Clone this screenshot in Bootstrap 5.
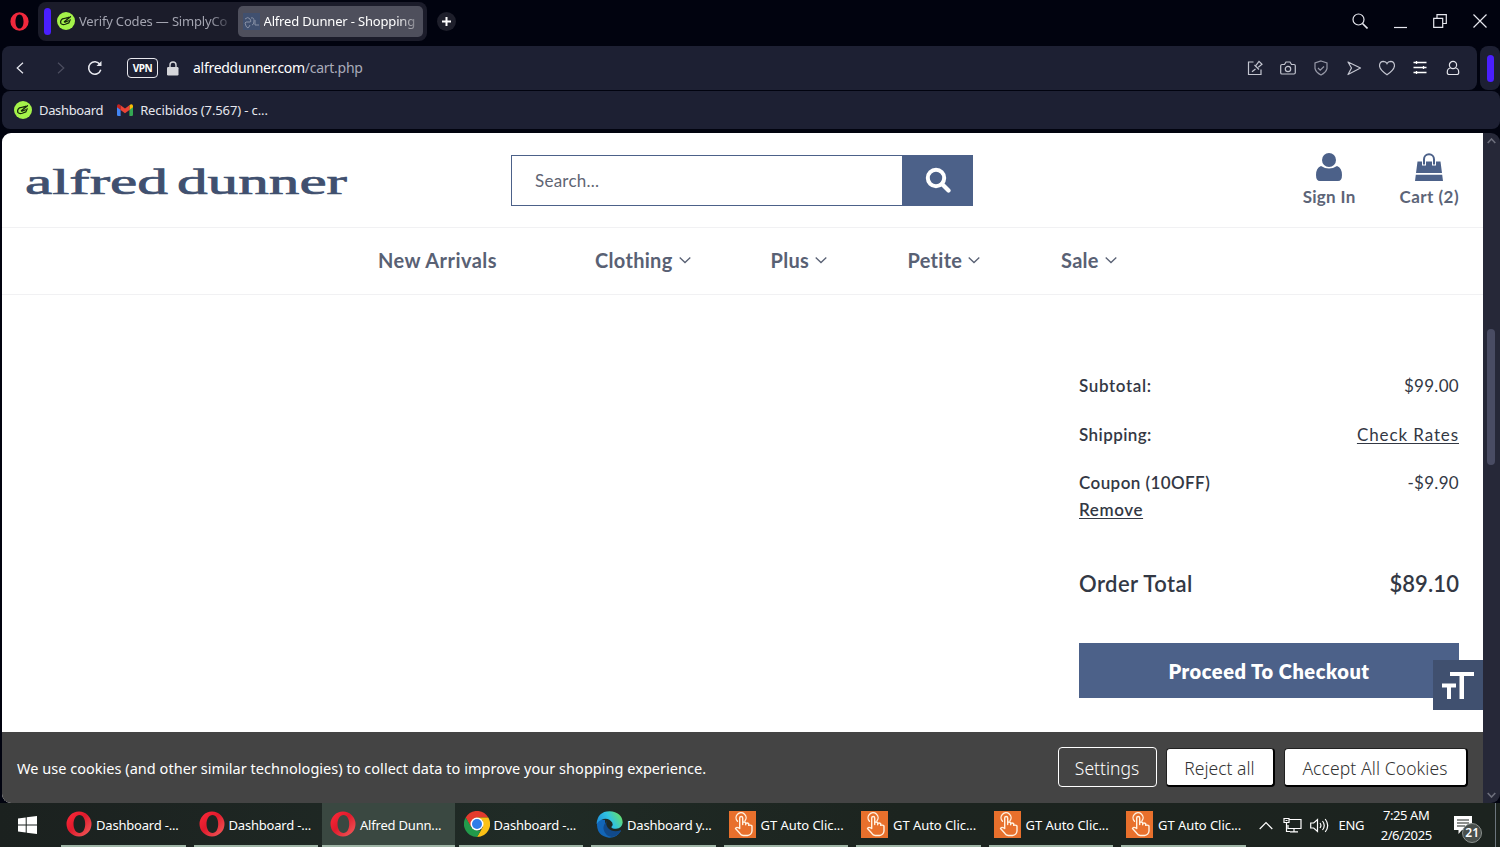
<!DOCTYPE html>
<html lang="en">
<head>
<meta charset="utf-8">
<title>Alfred Dunner - Shopping Cart</title>
<link href="https://cdn.jsdelivr.net/npm/bootstrap@5.3.0/dist/css/bootstrap.min.css" rel="stylesheet">
<style>
body{height:847px;overflow:hidden;background:#01030f;font-family:"Noto Sans","Open Sans",sans-serif;font-size:13px;line-height:1.2;color:#e6e7ee}
svg{display:block;flex:none}
.line-ico{fill:none;stroke:currentColor;stroke-width:1.2}
.tabstrip{height:46px}
.opera-mark{margin-left:10px;margin-right:9px}
.island{height:39px;width:389px;border-radius:8px;background:#1b1c2a;padding:0 4px 0 6px;margin-top:-4px}
.island-bar{width:7px;height:27px;border-radius:4px;background:#4a1fff}
.tab-idle{width:187px;color:#a3a4b0;padding-left:6px}
.tab-on{width:186px;height:31px;border-radius:5px;background:#4e4f5c;color:#fff;padding-left:5px}
.fade-end{white-space:nowrap;padding-top:2px;letter-spacing:-.17px;-webkit-mask-image:linear-gradient(90deg,#000 88%,rgba(0,0,0,.3));mask-image:linear-gradient(90deg,#000 88%,rgba(0,0,0,.3))}
.plus-tab{width:19px;height:19px;border-radius:50%;background:#1e1f2b;margin-left:10px;margin-top:-4px}
.win-ctl{margin-top:-4px;gap:26px;padding-right:13px}
.barbox{background:#1d2033;border-radius:8px}
.addr{height:44px;margin-left:2px;margin-right:3px}
.vpn{width:31px;height:20px;border:1.5px solid #e8e8ee;border-radius:4px;font-size:10px;font-weight:700;color:#fff;letter-spacing:-.4px}
.side-toggle{width:20px;height:44px}
.side-toggle i{width:7px;height:27px;border-radius:4px;background:#4a1fff}
.url{font-size:14px;color:#fff;letter-spacing:-.28px}
.url span{color:#a9abb9}
.marks{height:38px;margin:1px 0 0 2px;padding-left:12px}
.marks span{padding-top:2px}
.viewport{height:670px;margin:4px 0 0 2px;border-radius:9px;overflow:hidden;background:#262838}
.page{width:1481px;background:#fff;font-family:Lato,sans-serif;color:#333844}
.shop-head{height:95px;border-bottom:1px solid #f1f1f3}
.shop-nav{height:67px;border-bottom:1px solid #f1f1f3;font-size:20px;font-weight:700;color:#596174;padding-left:376px;padding-bottom:2px;letter-spacing:.3px}
.brandmark{margin-left:22px;width:326px;margin-top:6px;font-family:"Liberation Serif",serif;font-size:36px}
.finder{width:462px;height:51px;margin-left:161px}
.finder .form-control{border:1px solid #4c6189;border-radius:0;font-size:17px;color:#596174;padding:2px 22px 0 23px;background:#fff;box-shadow:none;letter-spacing:.25px}
.finder .form-control::placeholder{color:#5f6573;opacity:1}
.finder .btn{width:71px;border-radius:0;background:#4c6189;padding:0}
.acct{color:#5c6477;font-size:17px;font-weight:700;line-height:20px;letter-spacing:.3px}
.acct-label{margin-top:6px}
.totals{width:380px;margin-left:1077px;padding-top:77px;font-size:17px;line-height:27px;letter-spacing:.3px}
.totals dt{font-weight:600;letter-spacing:.42px}
.totals dd{margin:0}
.totals .trow{margin-bottom:21.6px}
.totals a{color:inherit;text-decoration:underline;text-underline-offset:2px;text-decoration-thickness:1px}
.grand{font-size:22px;font-weight:600;letter-spacing:.1px;padding-top:25px}
.totals .checkout{text-decoration:none}
.checkout{height:55px;margin-top:46px;border-radius:0;background:#4c6189;color:#fff!important;font-size:20px;font-weight:800;letter-spacing:.55px;padding-bottom:5px}
.textsize{right:0;bottom:93px;width:50px;height:50px;background:#40506f}
.cookies{height:71px;background:#444;color:#fff;font-family:"Noto Sans",sans-serif;font-size:14.5px;padding:0 15.500px 1px 15px}
.cookies .btn{font-family:"Noto Sans",sans-serif;font-weight:300;font-size:17.5px;padding:3px 0 0;border-radius:4px;letter-spacing:0}
.ck-set{width:99px;height:40px;border:1px solid #fff;color:#fff}
.ck-fill{height:39px;background:#fff;color:#333;border:1px solid #222;border-right:2px solid #000;border-bottom:2px solid #000}
.scroller{width:17px;padding:5px 4px}
.thumb{width:8px;height:136px;border-radius:4px;background:#494c63;margin-top:185px}
.taskbar{height:44px;background:linear-gradient(90deg,#1b211f,#202b26 35%,#1c241f 60%,#1c231f);font-size:13px;color:#fff}
.task{width:132.5px;padding:0 4px;height:44px}
.task>div{height:44px;border-bottom:2px solid #9fb5a6;padding-left:5px;white-space:nowrap}
.task-on{background:#3a4841}
.gt{width:27px;height:27px;background:#e8702c}
.tasklabel{letter-spacing:-.2px;padding-top:3px;margin-left:4px}
.tasklabel.gtl{letter-spacing:-.05px;margin-left:5px}
.clock{width:60px;line-height:20px;letter-spacing:-.4px;font-size:13px}
.count{left:8px;top:7px;width:20px;height:20px;border-radius:50%;background:#494f4c;border:1px solid #8b918e;font-size:12px;font-weight:600;line-height:18px}
</style>
</head>
<body class="d-flex flex-column">
<svg width="0" height="0" class="position-absolute">
<defs>
<linearGradient id="og" x1="0" x2="1" y1="0" y2="1"><stop offset="0" stop-color="#ff2b3a"/><stop offset=".45" stop-color="#e01a2c"/><stop offset="1" stop-color="#f2605e"/></linearGradient>
<linearGradient id="eg" x1="0" x2="1" y1=".6" y2=".2"><stop offset="0" stop-color="#1d8fdc"/><stop offset=".5" stop-color="#31c3e0"/><stop offset="1" stop-color="#6be35c"/></linearGradient>
<symbol id="opera" viewBox="0 0 26 26"><path fill="url(#og)" fill-rule="evenodd" d="M13 .5a12.500 12.500 0 1 1 0 25 12.500 12.500 0 0 1 0-25zm.5 3.500c-3.600 0-6 4-6 9s2.400 9 6 9 5.700-4 5.700-9-2.100-9-5.700-9z"/></symbol>
<symbol id="simply" viewBox="0 0 18 18"><circle cx="9" cy="9" r="9" fill="#a4f24a"/><g fill="none" stroke="#15240c" stroke-width="1.200" stroke-linejoin="round" stroke-linecap="round"><path d="M9.300 6L5.500 6.800Q2.900 8.700 3.800 11.300q1.600 1.900 4.500.9l3.500-1.300 1.400-3.200"/><path d="M7.300 9.800l6.200-5.100M8 10.300l3.500-1.500M9.300 6l2.500-.8"/></g></symbol>
<symbol id="hand" viewBox="0 0 27 27"><g fill="none" stroke="#fff1e0" stroke-width="1.400" stroke-linejoin="round" stroke-linecap="round"><path d="M10.700 17.500V7a1.500 1.500 0 0 1 3 0v6.500-2q1.600-1.200 3 .2v2-1.300q1.800-1 3 .3v1.700q2.200-.8 3.300.6V20q-.5 4-4.500 4.500h-4.300q-2.200-.3-3.400-2.200L6.500 17.500q.8-2.200 4.200 0"/><path d="M8.500 10.300a5 5 0 1 1 7.500-.4"/></g></symbol>
<symbol id="chev" viewBox="0 0 12 8"><path d="M.7 1.500l5.300 5 5.300-5" fill="none" stroke="#596174" stroke-width="1.300"/></symbol>
</defs></svg>

<header class="tabstrip d-flex align-items-center flex-shrink-0">
  <svg class="opera-mark" width="19" height="19" viewBox="0 0 26 26" style="margin-top:-3px"><path fill="#f0283c" fill-rule="evenodd" d="M13 .5a12.500 12.500 0 1 1 0 25 12.500 12.500 0 0 1 0-25zm0 2.800c-3.500 0-5.500 4.500-5.500 9.700s2 9.700 5.500 9.700 5.500-4.500 5.500-9.700-2-9.700-5.500-9.700z"/></svg>
  <div class="island d-flex align-items-center">
    <div class="island-bar"></div>
    <div class="tab-idle d-flex align-items-center gap-1"><svg width="18" height="18"><use href="#simply"/></svg><span class="fade-end">Verify Codes — SimplyCo</span></div>
    <div class="tab-on d-flex align-items-center gap-1"><svg width="17" height="17" viewBox="0 0 17 17"><path fill="#40506f" d="M0 0h17v17H0z"/><path d="M2 6q3-3 5 0t0 3-4 0 0 4 4-1M8 5q3-1 3 3t-2 4M12 7v5h4" fill="none" stroke="#8790a5"/></svg><span class="fade-end">Alfred Dunner - Shopping</span></div>
  </div>
  <div class="plus-tab d-flex align-items-center justify-content-center"><svg width="9" height="9" viewBox="0 0 9 9"><path d="M4.500 0v9M0 4.500h9" stroke="#fff" stroke-width="2"/></svg></div>
  <div class="win-ctl d-flex align-items-center ms-auto">
    <svg class="line-ico" width="16" height="16" viewBox="0 0 16 16"><circle cx="6.500" cy="6.500" r="5.500"/><path d="M10.500 10.500L15.500 15.500" stroke-width="1.600"/></svg>
    <svg class="line-ico" width="13" height="16" viewBox="0 0 13 16"><path d="M0 14.500h13"/></svg>
    <svg class="line-ico" width="14" height="14" viewBox="0 0 14 14"><path d="M.7 4.300h9v9h-9zM4 4V.7h9.300v8.800H10"/></svg>
    <svg class="line-ico" width="14" height="14" viewBox="0 0 14 14"><path d="M.5.5l13 13M13.500.5l-13 13"/></svg>
  </div>
</header>

<div class="d-flex flex-shrink-0">
  <nav class="barbox addr flex-fill d-flex align-items-center">
    <svg class="line-ico" width="8" height="12" viewBox="0 0 8 12" style="margin-left:14px"><path d="M7 .7L1.200 6 7 11.300"/></svg>
    <svg class="line-ico" width="8" height="12" viewBox="0 0 8 12" style="margin-left:33px;color:#4c4e60"><path d="M1 .7L6.800 6 1 11.300"/></svg>
    <svg class="line-ico" width="16" height="16" viewBox="0 0 16 16" style="margin-left:22px"><path d="M13.800 9.800A6.200 6.200 0 1 1 13 4.500" stroke-width="1.500"/><path d="M14.500 1v5H9.500z" fill="currentColor" stroke="none"/></svg>
    <div class="vpn d-flex align-items-center justify-content-center" style="margin-left:24px">VPN</div>
    <svg width="12" height="15" viewBox="0 0 12 15" style="margin-left:9px"><path d="M3 7V4a3 3 0 0 1 6 0v3" fill="none" stroke="#d5d6da" stroke-width="1.400"/><rect y="6" width="11.500" height="8.500" rx="1.200" fill="#d5d6da"/></svg>
    <div class="url" style="margin-left:14px">alfreddunner.com<span>/cart.php</span></div>
    <div class="d-flex align-items-center ms-auto" style="gap:17px;padding-right:16px;color:#c3c5d0">
      <svg class="line-ico" width="16" height="16" viewBox="0 0 16 16"><path d="M6.500 2H1.500v12.500H14V9.500M7.500 5l4.500 4.500M9 5.300l3-4L15 4.300l-3.700 2.900M8.500 9L5 11.800"/></svg>
      <svg class="line-ico" width="16" height="16" viewBox="0 0 16 16"><path d="M2 4.500h2.500L6 2h4l1.500 2.500H14a1.300 1.300 0 0 1 1.300 1.300v7A1.300 1.300 0 0 1 14 14H2a1.300 1.300 0 0 1-1.300-1.300v-7A1.300 1.300 0 0 1 2 4.500z"/><circle cx="8" cy="9" r="2.700"/></svg>
      <svg class="line-ico" width="16" height="16" viewBox="0 0 16 16" color="#9698a7"><path d="M8 1l6 2v5.500q-1 4-6 6.500-5-2.500-6-6.500V3zM5 8l2.200 2.200L11 6.500"/></svg>
      <svg class="line-ico" width="16" height="16" viewBox="0 0 16 16"><path d="M2 2l12.500 6L2 14.500 5.500 8z" stroke-linejoin="round"/></svg>
      <svg class="line-ico" width="16" height="16" viewBox="0 0 16 16"><path d="M8 14.800Q.5 9.500.5 5.500.8 1.500 4.300 1.300 7 1.300 8 3.500q1-2.200 3.700-2.200 3.500.2 3.800 4.200 0 4-7.500 9.300z"/></svg>
      <svg class="line-ico" width="16" height="16" viewBox="0 0 16 16" color="#fff"><path d="M1.500 2.500h13M1.500 7.500h13M1.500 12.500h13M4.500 1v3M11.500 6v3M4.500 11v3" stroke-width="1.300"/></svg>
      <svg class="line-ico" width="16" height="16" viewBox="0 0 16 16" color="#e2e3ea"><circle cx="8" cy="5" r="3.600"/><path d="M5.500 8Q2.300 8.500 2.300 12v.7q0 1.800 2 1.800h7.400q2 0 2-1.800V12q0-3.500-3.200-4"/></svg>
    </div>
  </nav>
  <div class="barbox side-toggle d-flex align-items-center justify-content-center"><i></i></div>
</div>

<nav class="barbox marks d-flex align-items-center flex-shrink-0">
  <svg width="18" height="18"><use href="#simply"/></svg>
  <span style="margin-left:7px;letter-spacing:-.35px">Dashboard</span>
  <svg width="16" height="12" viewBox="0 0 16 12" style="margin-left:14px"><path fill="#4285f4" d="M0 2.500l3.600 2.700V12H1.200A1.200 1.200 0 0 1 0 10.800z"/><path fill="#34a853" d="M16 2.500l-3.600 2.700V12h2.400a1.200 1.200 0 0 0 1.200-1.200z"/><path fill="#fbbc04" d="M12.400 1.200L14 .2Q16 0 16 2v1.200l-3.600 2.700z"/><path fill="#c5221f" d="M3.600 1.200L2 .2Q0 0 0 2v1.200l3.600 2.700z"/><path fill="#ea4335" d="M3.600 1.200L8 4.500l4.400-3.300v4.700L8 9.200 3.600 5.900z"/></svg>
  <span style="margin-left:7px;letter-spacing:-.12px">Recibidos (7.567) - c...</span>
</nav>

<main class="viewport d-flex flex-shrink-0">
  <div class="page position-relative d-flex flex-column">
    <div class="shop-head d-flex align-items-center flex-shrink-0">
      <svg class="brandmark" width="326" height="40" viewBox="0 0 326 40" fill="#40506f" stroke="#40506f" stroke-width=".7"><text x="1" y="31" textLength="143" lengthAdjust="spacingAndGlyphs">alfred</text><text x="153" y="31" textLength="170" lengthAdjust="spacingAndGlyphs">dunner</text></svg>
      <div class="finder input-group flex-nowrap">
        <input class="form-control" placeholder="Search...">
        <button class="btn d-flex align-items-center justify-content-center"><svg width="26" height="26" viewBox="0 0 26 26"><circle cx="11" cy="11" r="8.200" fill="none" stroke="#fff" stroke-width="4"/><path d="M17 17l6.500 6.500" stroke="#fff" stroke-width="4.200" stroke-linecap="round"/></svg></button>
      </div>
      <div class="acct d-flex text-center ms-auto" style="gap:44px;padding-right:24px">
        <div><svg class="mx-auto" width="26" height="28" viewBox="0 0 26 28" fill="#4c6189"><circle cx="13" cy="7" r="7"/><path d="M5 13q8 5 16 0 5 2 5 9 0 6-4 6H4q-4 0-4-6 0-7 5-9z"/></svg><div class="acct-label">Sign In</div></div>
        <div><svg class="mx-auto" width="28" height="28" viewBox="0 0 28 28"><path d="M2.500 8.500h23L27 20H1zM.8 21.800h26.400L28 28H0z" fill="#4c6189"/><path d="M9 12.500V7.500a5 5 0 0 1 10 0v5" fill="none" stroke="#fff" stroke-width="4"/><path d="M9 11.500V6.300a5 5 0 0 1 10 0v5.200" fill="none" stroke="#4c6189" stroke-width="2"/></svg><div class="acct-label" style="letter-spacing:.45px">Cart (2)</div></div>
      </div>
    </div>
    <nav class="shop-nav d-flex align-items-center flex-shrink-0">
      <span style="width:217px;letter-spacing:.45px">New Arrivals</span>
      <span class="d-flex align-items-center" style="width:175.500px;gap:6px">Clothing <svg width="12" height="8"><use href="#chev"/></svg></span>
      <span class="d-flex align-items-center" style="width:137px;gap:6px">Plus <svg width="12" height="8"><use href="#chev"/></svg></span>
      <span class="d-flex align-items-center" style="width:153.500px;gap:6px">Petite <svg width="12" height="8"><use href="#chev"/></svg></span>
      <span class="d-flex align-items-center" style="gap:6px">Sale <svg width="12" height="8"><use href="#chev"/></svg></span>
    </nav>
    <section class="totals flex-fill">
      <dl class="m-0">
        <div class="trow d-flex justify-content-between"><dt style="letter-spacing:.62px">Subtotal:</dt><dd>$99.00</dd></div>
        <div class="trow d-flex justify-content-between"><dt>Shipping:</dt><dd><a href="#" style="letter-spacing:.9px">Check Rates</a></dd></div>
        <div class="trow d-flex justify-content-between"><dt>Coupon (10OFF)<br><a href="#" style="letter-spacing:.6px">Remove</a></dt><dd>-$9.90</dd></div>
        <div class="grand d-flex justify-content-between"><dt>Order Total</dt><dd>$89.10</dd></div>
      </dl>
      <a class="checkout btn w-100 d-flex align-items-center justify-content-center" href="#">Proceed To Checkout</a>
    </section>
    <div class="textsize position-absolute"><svg width="50" height="50" viewBox="0 0 50 50" fill="#fff"><path d="M17 12h24v4H31v23h-4.500V16H17zM9 23.500h14v4h-5V39h-4V27.500H9z"/></svg></div>
    <footer class="cookies d-flex align-items-center flex-shrink-0">
      <span class="me-auto pt-1" style="letter-spacing:.03px">We use cookies (and other similar technologies) to collect data to improve your shopping experience.</span>
      <button class="btn ck-set">Settings</button>
      <button class="btn ck-fill" style="width:109px;margin-left:9px">Reject all</button>
      <button class="btn ck-fill" style="width:184px;margin-left:9px;letter-spacing:.1px">Accept All Cookies</button>
    </footer>
  </div>
  <div class="scroller flex-shrink-0 d-flex flex-column">
    <svg width="9" height="6" viewBox="0 0 9 6"><path d="M.7 5l3.800-4 3.800 4" fill="none" stroke="#6d6f7c" stroke-width="1.600"/></svg>
    <div class="thumb"></div>
    <svg class="mt-auto" width="9" height="6" viewBox="0 0 9 6"><path d="M.7 1l3.800 4 3.800-4" fill="none" stroke="#6d6f7c" stroke-width="1.600"/></svg>
  </div>
</main>

<footer class="taskbar d-flex align-items-center flex-shrink-0">
  <svg width="19" height="18" viewBox="0 0 19 18" fill="#fff" style="margin:0 20.500px 0 17.500px"><path d="M0 2.600L7.700 1.500v7H0zM8.700 1.300L19 0v8.500H8.700zM0 9.500h7.700v7L0 15.400zM8.700 9.500H19V18L8.700 16.700z"/></svg>
  <div class="task"><div class="d-flex align-items-center"><svg width="26" height="26"><use href="#opera"/></svg><span class="tasklabel">Dashboard -...</span></div></div>
  <div class="task"><div class="d-flex align-items-center"><svg width="26" height="26"><use href="#opera"/></svg><span class="tasklabel">Dashboard -...</span></div></div>
  <div class="task px-0 task-on"><div class="d-flex align-items-center" style="padding-left:8px"><svg width="26" height="26"><use href="#opera"/></svg><span class="tasklabel">Alfred Dunn...</span></div></div>
  <div class="task"><div class="d-flex align-items-center"><svg width="26" height="26" viewBox="0 0 26 26"><path fill="#e33b2e" d="M1.700 6.500a13 13 0 0 1 22.600 0H13L7 16.500z"/><path fill="#fbc116" d="M24.300 6.500A13 13 0 0 1 13 26l5.700-9.700L18.700 9.700 13 6.500z"/><path fill="#229a4b" d="M13 26A13 13 0 0 1 1.700 6.500L7.400 16.200 13 19.500h3.800z"/><circle cx="13" cy="13" r="6.500" fill="#fff"/><circle cx="13" cy="13" r="5" fill="#2f7de8"/></svg><span class="tasklabel">Dashboard -...</span></div></div>
  <div class="task"><div class="d-flex align-items-center"><svg width="27" height="27" viewBox="0 0 27 27"><path fill="#1266b8" d="M1 11Q4 7.500 9 9q-1 9 6 12 5 1.800 10-1.500Q21 27 13 26.700 0 25 1 11z"/><path fill="#114a8b" d="M11 10q-2 3 1 7 5 5 12.500 2.300.8 0 .3.900Q22 25 16 26q-7-1-8.500-8-.3-5 3.500-8z"/><path fill="url(#eg)" d="M.5 13Q1.500.5 13.500.3 26 1 26.700 11.500 26 17.500 20 17.700q-5 0-4.500-2 2-2 .7-4.200Q13 6.500 7 8 2.500 9.300.5 13z"/></svg><span class="tasklabel">Dashboard y...</span></div></div>
  <div class="task"><div class="d-flex align-items-center"><svg class="gt" width="27" height="27"><use href="#hand"/></svg><span class="tasklabel gtl">GT Auto Clic...</span></div></div>
  <div class="task"><div class="d-flex align-items-center"><svg class="gt" width="27" height="27"><use href="#hand"/></svg><span class="tasklabel gtl">GT Auto Clic...</span></div></div>
  <div class="task"><div class="d-flex align-items-center"><svg class="gt" width="27" height="27"><use href="#hand"/></svg><span class="tasklabel gtl">GT Auto Clic...</span></div></div>
  <div class="task"><div class="d-flex align-items-center"><svg class="gt" width="27" height="27"><use href="#hand"/></svg><span class="tasklabel gtl">GT Auto Clic...</span></div></div>
  <svg class="line-ico" width="14" height="9" viewBox="0 0 14 9" style="margin-left:9px"><path d="M.7 8L7 1.500 13.300 8"/></svg>
  <svg class="line-ico" width="19" height="16" viewBox="0 0 19 16" style="margin-left:10px"><path d="M6 2.500h12v9H5V8M11 11.500v3M7 14.800h8M1 1.500h5v4H1zM3.500 5.500v9H7M2.500 3.500h2"/></svg>
  <svg class="line-ico" width="20" height="15" viewBox="0 0 20 15" style="margin-left:8px"><path d="M.7 5h3L7.500 1.500v12L3.700 10h-3zM10 5q1.800 2.500 0 5M12.500 3q3.500 4.500 0 9M15.200 1q5 6.500 0 13"/></svg>
  <span style="margin-left:9px;padding-top:2px;letter-spacing:-.3px">ENG</span>
  <div class="clock text-center" style="margin-left:12px">7:25 AM<br>2/6/2025</div>
  <div class="position-relative" style="margin-left:18px"><svg width="18" height="19" viewBox="0 0 18 19"><path fill="#fff" d="M0 0h18v14H8l-3.500 4V14H0z"/><path d="M3 4h12M3 7h12M3 10h8" stroke="#1c231f" stroke-width="1.200"/></svg><span class="count position-absolute text-center">21</span></div>
  <div class="ms-auto me-1 border-start border-secondary align-self-stretch"></div>
</footer>
<script src="https://cdn.jsdelivr.net/npm/bootstrap@5.3.0/dist/js/bootstrap.bundle.min.js"></script>
</body>
</html>
